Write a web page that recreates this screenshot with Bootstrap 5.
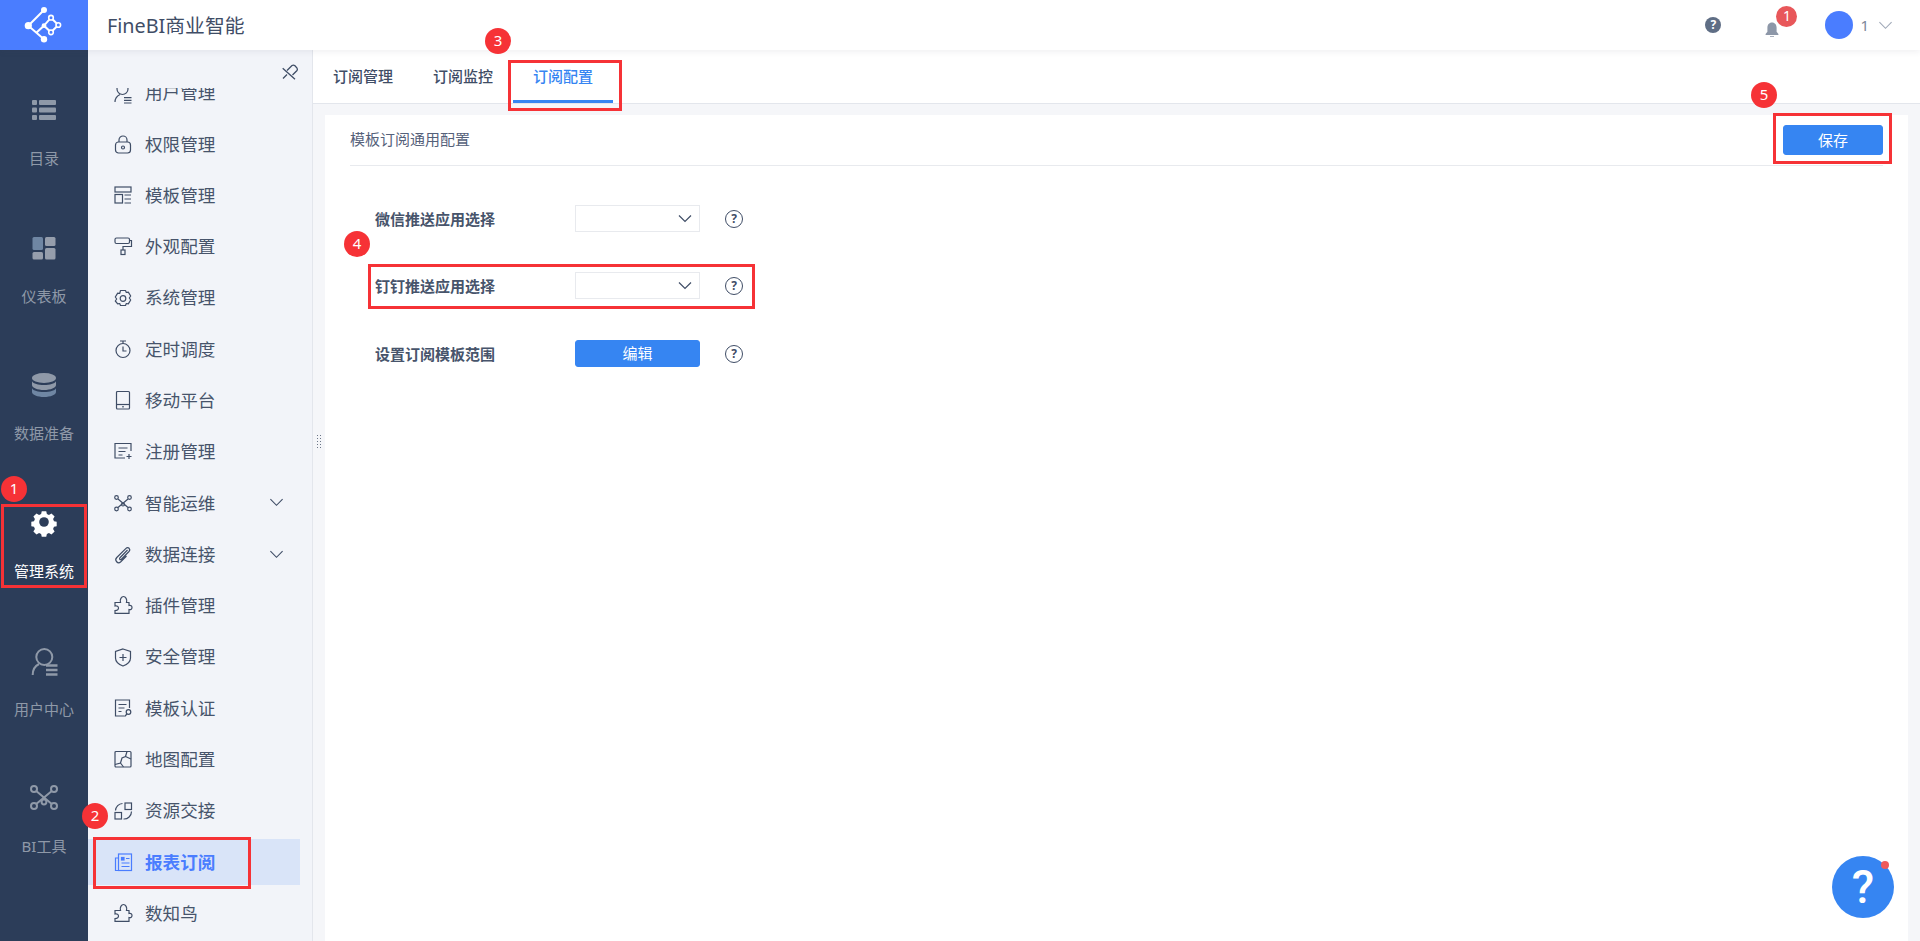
<!DOCTYPE html>
<html lang="zh-CN">

<head>
    <meta charset="UTF-8">
    <meta name="viewport" content="width=device-width, initial-scale=1.0">
    <title>FineBI商业智能</title>
    <link href="https://cdn.jsdelivr.net/npm/bootstrap@5.3.0/dist/css/bootstrap.min.css" rel="stylesheet">
    <style>
        html, body { height: 100%; }

        body {
            font-family: "Noto Sans", "Noto Sans CJK SC", sans-serif;
            color: #3f4d66;
            background: #fff;
            overflow: hidden;
            position: relative;
        }

        svg { overflow: visible; }

        /* top bar */
        .top-bar { height: 50px; background: #fff; position: relative; z-index: 2; box-shadow: 0 2px 6px rgba(60, 70, 90, .08); flex-shrink: 0; }
        .logo-box { width: 88px; background: #4a7dff; }
        .app-title { font-size: 19.8px; padding: 1px 0 0 19px; color: #3f4d66; }
        .top-help { width: 16px; height: 16px; background: #5f6e85; color: #fff; font-size: 12px; font-weight: 700; line-height: 16px; text-align: center; margin-right: 42px; }
        .top-bell { width: 18px; height: 18px; color: #8d97a8; margin-right: 44px; position: relative; }
        .bell-badge { position: absolute; top: -10px; left: 13px; width: 21px; height: 21px; background: #e8575a; color: #fff; font-size: 14px; line-height: 20px; text-align: center; }
        .avatar { width: 28px; height: 28px; background: #4a7dff; margin-right: 7px; }
        .user-name { font-size: 15px; color: #7b879a; margin-right: 9px; }
        .user-arrow { width: 15px; height: 15px; color: #a0a9b8; margin-right: 27px; }

        /* left rail */
        .rail { width: 88px; background: #2c3d59; padding-top: 15px; flex-shrink: 0; }
        .rail-item { height: 137.7px; color: #8f99a8; font-size: 15px; gap: 24px; padding-top: 32px; }
        .rail-item svg { width: 26px; height: 26px; }
        .rail-item.is-on { color: #fff; }

        /* menu column */
        .side-menu { width: 225px; background: #f2f4f9; border-right: 1px solid #e3e6ec; flex-shrink: 0; padding-top: 38px; position: relative; }
        .pin-icon { position: absolute; top: 13px; right: 14px; width: 18px; height: 18px; color: #3f4d66; }
        .menu-clip { height: 100%; overflow: hidden; }
        .menu-list { margin-top: -21.25px; }
        .menu-row { height: 51.3px; padding: 3px 12px 3px 0; width: 212px; font-size: 17.6px; color: #47546b; }
        .menu-row .ico { width: 18px; height: 18px; margin: 0 13px 0 26px; color: #3f4d66; flex-shrink: 0; }
        .menu-row .arrow { width: 15px; height: 15px; margin-left: auto; margin-right: 4px; color: #3f4d66; }
        .row-active { color: #4a7dff; font-weight: 700; position: relative; }
        .row-active::before { content: ""; position: absolute; left: 0; right: 0; top: 3px; bottom: 3px; background: #d9e4f8; }
        .row-active > * { position: relative; }
        .row-active .ico { color: #4a7dff; }

        /* right part */
        .work-area { background: #f5f6f9; min-width: 0; position: relative; }
        .tab-strip { height: 54px; background: #fff; border-bottom: 1px solid #e3e6ec; flex-shrink: 0; }
        .tab-link { width: 100px; height: 53px; padding: 0; line-height: 53px; text-align: center; font-size: 15px; font-weight: 500; color: #3f4d66; }
        .tab-link.is-on { color: #3685f2; border-bottom: 3px solid #3685f2; }
        .panel { margin: 11px 12px 0 12px; padding: 10px 25px 0; background: #fff; }
        .panel-head { height: 41px; border-bottom: 1px solid #e8eaee; font-size: 15px; color: #55617a; padding-bottom: 11px; }
        .save-btn, .edit-btn { --bs-btn-bg: #3685f2; --bs-btn-border-color: #3685f2; --bs-btn-hover-bg: #3685f2; --bs-btn-hover-border-color: #3685f2; --bs-btn-color: #fff; --bs-btn-font-size: 15px; --bs-btn-padding-y: 0; --bs-btn-border-radius: 3px; }
        .save-btn { width: 100px; height: 30px; line-height: 28px; }
        .edit-btn { width: 125px; height: 27px; line-height: 25px; }
        .form-rows { padding: 39px 0 0 25px; }
        .form-line { height: 27px; margin-bottom: 40px; }
        .form-line.tight { margin-bottom: 41px; }
        .line-label { width: 200px; font-size: 15px; font-weight: 700; color: #47546b; padding-top: 2px; }
        .app-select { width: 125px; height: 27px; border: 1px solid #e8eaee; border-radius: 0; padding: 0; background-size: 16px 16px; background-position: right 6px center; background-image: url("data:image/svg+xml,%3Csvg xmlns='http://www.w3.org/2000/svg' viewBox='0 0 16 16'%3E%3Cpath d='M2 4.5l6 6 6-6' fill='none' stroke='%233f4d66' stroke-width='1.2'/%3E%3C/svg%3E"); }
        .q-mark { width: 18px; height: 18px; border: 1.5px solid #3f4d66; margin-left: 25px; font-size: 12px; font-weight: 700; line-height: 15px; text-align: center; color: #3f4d66; }
        .grip { position: absolute; left: 3px; top: 384px; width: 6px; height: 15px; background-image: radial-gradient(#6b7688 1px, transparent 1px); background-size: 3px 3px; }

        /* things that lie over the page */
        .float-help { position: absolute; z-index: 4; left: 1832px; top: 856px; width: 62px; height: 62px; background: #3685f2; color: #fff; font-family: Roboto, sans-serif; font-size: 46px; font-weight: 500; line-height: 62px; text-align: center; }
        .float-dot { position: absolute; z-index: 4; left: 1881px; top: 861px; width: 8px; height: 8px; background: #ee5a5a; }
        .note-box { position: absolute; z-index: 5; border: 3px solid #f63236; pointer-events: none; }
        .note-num { position: absolute; z-index: 5; width: 26px; height: 26px; background: #f63236; color: #fff; font-size: 15px; line-height: 25px; text-align: center; }
        .b1 { left: 1px; top: 504px; width: 86px; height: 84px; }
        .b2 { left: 93px; top: 837px; width: 158px; height: 52px; }
        .b3 { left: 508px; top: 60px; width: 114px; height: 51px; }
        .b4 { left: 368px; top: 264px; width: 387px; height: 45px; }
        .b5 { left: 1773px; top: 113px; width: 119px; height: 51px; }
        .n1 { left: 1px; top: 476px; }
        .n2 { left: 82px; top: 803px; }
        .n3 { left: 485px; top: 28px; }
        .n4 { left: 344px; top: 231px; }
        .n5 { left: 1751px; top: 82px; }
    </style>
</head>

<body class="d-flex flex-column">

    <!-- Top bar -->
    <header class="top-bar d-flex align-items-center">
        <div class="logo-box h-100 d-flex align-items-center justify-content-center">
            <svg width="88" height="50" viewBox="0 0 88 50">
                <path d="M44 10L28.300 25.700L44 39.300M36 33L44 25.700L51 32.300L58.300 25L51 17.700L44 25.700" fill="none" stroke="#fff" stroke-width="2"/>
                <circle cx="44" cy="10" r="3" fill="#fff"/><circle cx="28.300" cy="25.700" r="3.600" fill="#fff"/><circle cx="44" cy="39.300" r="3.200" fill="#fff"/><circle cx="44" cy="25.700" r="2.400" fill="#fff"/>
                <circle cx="51" cy="17.700" r="2.300" fill="#4a7dff" stroke="#fff" stroke-width="1.600"/><circle cx="58.300" cy="25" r="2.300" fill="#4a7dff" stroke="#fff" stroke-width="1.600"/><circle cx="51" cy="32.300" r="2.300" fill="#4a7dff" stroke="#fff" stroke-width="1.600"/>
            </svg>
        </div>
        <div class="app-title">FineBI商业智能</div>
        <div class="ms-auto d-flex align-items-center">
            <span class="top-help rounded-circle">?</span>
            <span class="top-bell d-block">
                <svg viewBox="0 0 18 18" width="18" height="18"><path d="M9 1.500c-3 0-4.600 2.400-4.600 5.200v4L2.600 13v1h12.800v-1l-1.800-2.300v-4C13.600 3.900 12 1.500 9 1.500zM7 15.200h4V16H7z" fill="currentColor"/></svg>
                <span class="bell-badge rounded-circle">1</span>
            </span>
            <span class="avatar rounded-circle"></span>
            <span class="user-name">1</span>
            <svg class="user-arrow" viewBox="0 0 16 16"><path d="M1.500 4.500L8 11l6.500-6.500" fill="none" stroke="currentColor" stroke-width="1.200"/></svg>
        </div>
    </header>

    <div class="d-flex flex-grow-1 overflow-hidden">
        <!-- Left rail -->
        <nav class="rail">
            <div class="rail-item d-flex flex-column align-items-center">
                <svg viewBox="0 0 26 26" fill="currentColor"><rect x="1" y="3" width="5" height="5" rx="1"/><rect x="8" y="3" width="17" height="5" rx="1"/><rect x="1" y="10.500" width="5" height="5" rx="1"/><rect x="8" y="10.500" width="17" height="5" rx="1"/><rect x="1" y="18" width="5" height="5" rx="1"/><rect x="8" y="18" width="17" height="5" rx="1"/></svg>
                <span>目录</span>
            </div>
            <div class="rail-item d-flex flex-column align-items-center">
                <svg viewBox="0 0 26 26"><rect x="1.500" y="2" width="10.500" height="13" rx="1.500" fill="#6f86a3"/><rect x="14" y="2" width="10.500" height="9" rx="1.500" fill="#969eac"/><rect x="1.500" y="17" width="10.500" height="7.500" rx="1.500" fill="#969eac"/><rect x="14" y="13" width="10.500" height="11.500" rx="1.500" fill="#969eac"/></svg>
                <span>仪表板</span>
            </div>
            <div class="rail-item d-flex flex-column align-items-center">
                <svg viewBox="0 0 26 26" fill="currentColor"><ellipse cx="13" cy="6" rx="12" ry="5"/><path d="M1 9.200c1.500 2.600 6 3.800 12 3.800s10.500-1.200 12-3.800V13c0 2.800-5.400 5-12 5S1 15.800 1 13z"/><path d="M1 16.200c1.500 2.600 6 3.800 12 3.800s10.500-1.200 12-3.800V20c0 2.800-5.400 5-12 5S1 22.800 1 20z" fill="#6f86a3"/></svg>
                <span>数据准备</span>
            </div>
            <div class="rail-item is-on d-flex flex-column align-items-center">
                <svg viewBox="0 0 26 26"><path d="M10.500 1h5l.7 3.200 2.300 1 2.800-1.700 3.500 3.500-1.700 2.800 1 2.300 3 .7v4.900l-3 .7-1 2.400 1.700 2.700-3.500 3.500-2.800-1.700-2.300 1-.7 3h-5l-.7-3-2.300-1-2.800 1.700-3.500-3.500 1.700-2.700-1-2.400-3-.7v-4.900l3-.7 1-2.300-1.700-2.800 3.500-3.500 2.800 1.700 2.300-1z" transform="translate(1.300 .3) scale(.9)" fill="#fff"/><circle cx="13" cy="12" r="4.800" fill="#2c3d59"/></svg>
                <span>管理系统</span>
            </div>
            <div class="rail-item d-flex flex-column align-items-center">
                <svg viewBox="0 0 26 26" fill="none" stroke="currentColor" stroke-width="2"><circle cx="13.300" cy="9" r="8"/><path d="M1.700 27c0-6 2.300-9 6.300-11"/><path d="M15 17.500h11.500M15 22h11.500M15 26.500h11.500" stroke-width="2.400"/></svg>
                <span>用户中心</span>
            </div>
            <div class="rail-item d-flex flex-column align-items-center">
                <svg viewBox="0 0 26 26" fill="none" stroke="currentColor" stroke-width="2"><circle cx="3" cy="4" r="3"/><circle cx="23" cy="4" r="3"/><circle cx="3" cy="21" r="3"/><circle cx="23" cy="21" r="3"/><circle cx="13" cy="17" r="2.400"/><path d="M5.200 6L20.800 19M20.800 6L5.200 19"/></svg>
                <span>BI工具</span>
            </div>
        </nav>

        <!-- Menu column -->
        <aside class="side-menu">
            <svg class="pin-icon" viewBox="0 0 18 18" fill="none" stroke="currentColor" stroke-width="1.300"><path d="M2.700 5.300L15 16.300M7 7.500L12 2.500Q13.500 1.500 15 2.700L17 5Q17.800 6.500 17 7.500L12.500 12M7 11.500L3 15.500"/></svg>
            <div class="menu-clip">
                <div class="menu-list">
                    <div class="menu-row d-flex align-items-center"><svg class="ico" viewBox="0 0 18 18" fill="none" stroke="currentColor" stroke-width="1.200"><circle cx="8.500" cy="6" r="5.500"/><path d="M1 19c0-4 2-6 5-7.500M10 14.700h7.500M10 17.300h7.500M10 20h7.500"/></svg><span>用户管理</span></div>
                    <div class="menu-row d-flex align-items-center"><svg class="ico" viewBox="0 0 18 18" fill="none" stroke="currentColor" stroke-width="1.200"><rect x="1.500" y="7" width="15" height="11" rx="3"/><path d="M5 7V5a4 4 0 0 1 8 0v2"/><circle cx="9" cy="12.500" r="1.500"/></svg><span>权限管理</span></div>
                    <div class="menu-row d-flex align-items-center"><svg class="ico" viewBox="0 0 18 18" fill="none" stroke="currentColor" stroke-width="1.200"><rect x="1" y="1" width="16" height="5"/><rect x="1" y="8.500" width="7.500" height="8.500"/><path d="M10.500 9h6.500M10.500 13h6.500M10.500 17h6.500"/></svg><span>模板管理</span></div>
                    <div class="menu-row d-flex align-items-center"><svg class="ico" viewBox="0 0 18 18" fill="none" stroke="currentColor" stroke-width="1.200"><rect x="1" y="1" width="14.500" height="5.500" rx="1.500"/><path d="M15.500 3.500H17.500V9.500H9V13"/><rect x="7" y="13" width="4" height="4.500"/></svg><span>外观配置</span></div>
                    <div class="menu-row d-flex align-items-center"><svg class="ico" viewBox="0 0 18 18" fill="none" stroke="currentColor" stroke-width="1.200" stroke-linejoin="round"><path d="M6.500 1.500h5l.8 2 2-.4 2.400 3.900-1.400 2 1.400 2-2.400 3.900-2-.4-.8 2h-5l-.8-2-2 .4L1.300 12l1.400-2-1.400-2 2.400-3.900 2 .4z"/><circle cx="9" cy="9.500" r="2.800"/></svg><span>系统管理</span></div>
                    <div class="menu-row d-flex align-items-center"><svg class="ico" viewBox="0 0 18 18" fill="none" stroke="currentColor" stroke-width="1.200"><circle cx="9" cy="10.500" r="7"/><path d="M6 1h6M9 1v2.500M9 6.500v4.500h3.500"/></svg><span>定时调度</span></div>
                    <div class="menu-row d-flex align-items-center"><svg class="ico" viewBox="0 0 18 18" fill="none" stroke="currentColor" stroke-width="1.200"><rect x="2.500" y=".5" width="13" height="17.500" rx="1"/><path d="M2.500 13.500h13"/><path d="M8.300 15.700h1.400" stroke-width="1.600"/></svg><span>移动平台</span></div>
                    <div class="menu-row d-flex align-items-center"><svg class="ico" viewBox="0 0 18 18" fill="none" stroke="currentColor" stroke-width="1.200"><path d="M11 16H1V1.500h16V9M4.500 6h9M4.500 9.500h7M4.500 13h4M12.500 14.500h5M15 12v5"/></svg><span>注册管理</span></div>
                    <div class="menu-row d-flex align-items-center"><svg class="ico" viewBox="0 0 18 18" fill="none" stroke="currentColor" stroke-width="1.200"><circle cx="2.500" cy="3.500" r="1.800"/><circle cx="15.500" cy="3.500" r="1.800"/><circle cx="2.500" cy="15" r="1.800"/><circle cx="15.500" cy="15" r="1.800"/><circle cx="9" cy="10.500" r="1.500"/><path d="M4 5l10 8.500M14 5L4 13.500"/></svg><span>智能运维</span><svg class="arrow" viewBox="0 0 16 16"><path d="M1.500 4.500L8 11l6.500-6.500" fill="none" stroke="currentColor" stroke-width="1.200"/></svg></div>
                    <div class="menu-row d-flex align-items-center"><svg class="ico" viewBox="0 0 18 18" fill="none" stroke="currentColor" stroke-width="1.200"><path d="M13.500 5L6.200 12.500c-1.300 1.300-.2 2.900 1.200 1.700L15 6.500c2-2.200-.8-5.400-3-3.200L2.800 12.500c-2.800 3 1 7 4 4.200L12.500 11"/></svg><span>数据连接</span><svg class="arrow" viewBox="0 0 16 16"><path d="M1.500 4.500L8 11l6.500-6.500" fill="none" stroke="currentColor" stroke-width="1.200"/></svg></div>
                    <div class="menu-row d-flex align-items-center"><svg class="ico" viewBox="0 0 18 18" fill="none" stroke="currentColor" stroke-width="1.200"><path d="M3 6.500h3.500c-1-3 1-6 3-6s4 3 3 6H15v3c2-.5 3 .5 3 2s-1 2.500-3 2v3.800H1v-2.800c2.500 0 3.500-1 3.500-2.500S3 9.500 1 10V6.500z"/></svg><span>插件管理</span></div>
                    <div class="menu-row d-flex align-items-center"><svg class="ico" viewBox="0 0 18 18" fill="none" stroke="currentColor" stroke-width="1.200"><path d="M9 1l7.500 2.500v6.500c0 4-3.500 6.500-7.500 8-4-1.500-7.500-4-7.500-8V3.500zM9 6v7M5.500 9.500h7"/></svg><span>安全管理</span></div>
                    <div class="menu-row d-flex align-items-center"><svg class="ico" viewBox="0 0 18 18" fill="none" stroke="currentColor" stroke-width="1.200"><path d="M10 17H1.500V1h14v8M4.500 5.500h8M4.500 9h6M4.500 12.500h3"/><circle cx="14.500" cy="13" r="2.300"/><path d="M13 15l-2.500 2.500"/></svg><span>模板认证</span></div>
                    <div class="menu-row d-flex align-items-center"><svg class="ico" viewBox="0 0 18 18" fill="none" stroke="currentColor" stroke-width="1.200"><rect x="1" y="1.500" width="16" height="15.500" rx="1"/><path d="M13 1.500L11.500 6.500L8 8L6.500 13L1 14.500M11.500 6.500L17 9M6.500 13L9.500 17"/></svg><span>地图配置</span></div>
                    <div class="menu-row d-flex align-items-center"><svg class="ico" viewBox="0 0 18 18" fill="none" stroke="currentColor" stroke-width="1.200"><rect x="1" y="10.500" width="6.500" height="6.500"/><rect x="11" y="1" width="6.500" height="6.500"/><path d="M1.500 8.500A7.500 7.500 0 0 1 8.500 1.500M17.500 9.500A7.500 7.500 0 0 1 9.500 17"/></svg><span>资源交接</span></div>
                    <div class="menu-row row-active d-flex align-items-center"><svg class="ico" viewBox="0 0 18 18" fill="none" stroke="currentColor" stroke-width="1.200"><rect x="4.500" y="1" width="13" height="16.500"/><path d="M4.500 5H1.500V17.500H4.500M12 5.500h3.500M7.500 10h8M7.500 13.500h8"/><rect x="7.500" y="4.500" width="2.500" height="2.500" fill="currentColor"/></svg><span>报表订阅</span></div>
                    <div class="menu-row d-flex align-items-center"><svg class="ico" viewBox="0 0 18 18" fill="none" stroke="currentColor" stroke-width="1.200"><path d="M3 6.500h3.500c-1-3 1-6 3-6s4 3 3 6H15v3c2-.5 3 .5 3 2s-1 2.500-3 2v3.800H1v-2.800c2.500 0 3.500-1 3.500-2.500S3 9.500 1 10V6.500z"/></svg><span>数知鸟</span></div>
                </div>
            </div>
        </aside>

        <!-- Work area -->
        <main class="work-area flex-grow-1 d-flex flex-column">
            <span class="grip"></span>
            <ul class="nav tab-strip">
                <li class="nav-item"><a class="nav-link tab-link" href="#">订阅管理</a></li>
                <li class="nav-item"><a class="nav-link tab-link" href="#">订阅监控</a></li>
                <li class="nav-item"><a class="nav-link tab-link is-on" href="#">订阅配置</a></li>
            </ul>
            <section class="panel flex-grow-1">
                <div class="panel-head d-flex align-items-center justify-content-between">
                    <span>模板订阅通用配置</span>
                    <button type="button" class="btn save-btn">保存</button>
                </div>
                <div class="form-rows">
                    <div class="form-line d-flex align-items-center">
                        <span class="line-label">微信推送应用选择</span>
                        <select class="form-select app-select"></select>
                        <span class="q-mark rounded-circle">?</span>
                    </div>
                    <div class="form-line tight d-flex align-items-center">
                        <span class="line-label">钉钉推送应用选择</span>
                        <select class="form-select app-select"></select>
                        <span class="q-mark rounded-circle">?</span>
                    </div>
                    <div class="form-line d-flex align-items-center">
                        <span class="line-label">设置订阅模板范围</span>
                        <button type="button" class="btn edit-btn">编辑</button>
                        <span class="q-mark rounded-circle">?</span>
                    </div>
                </div>
            </section>
        </main>
    </div>

    <!-- Floating help -->
    <div class="float-help rounded-circle">?</div>
    <span class="float-dot rounded-circle"></span>

    <!-- Red callouts -->
    <div class="note-box b1"></div>
    <div class="note-box b2"></div>
    <div class="note-box b3"></div>
    <div class="note-box b4"></div>
    <div class="note-box b5"></div>
    <span class="note-num n1 rounded-circle">1</span>
    <span class="note-num n2 rounded-circle">2</span>
    <span class="note-num n3 rounded-circle">3</span>
    <span class="note-num n4 rounded-circle">4</span>
    <span class="note-num n5 rounded-circle">5</span>

    <script src="https://cdn.jsdelivr.net/npm/bootstrap@5.3.0/dist/js/bootstrap.bundle.min.js"></script>
</body>

</html>
